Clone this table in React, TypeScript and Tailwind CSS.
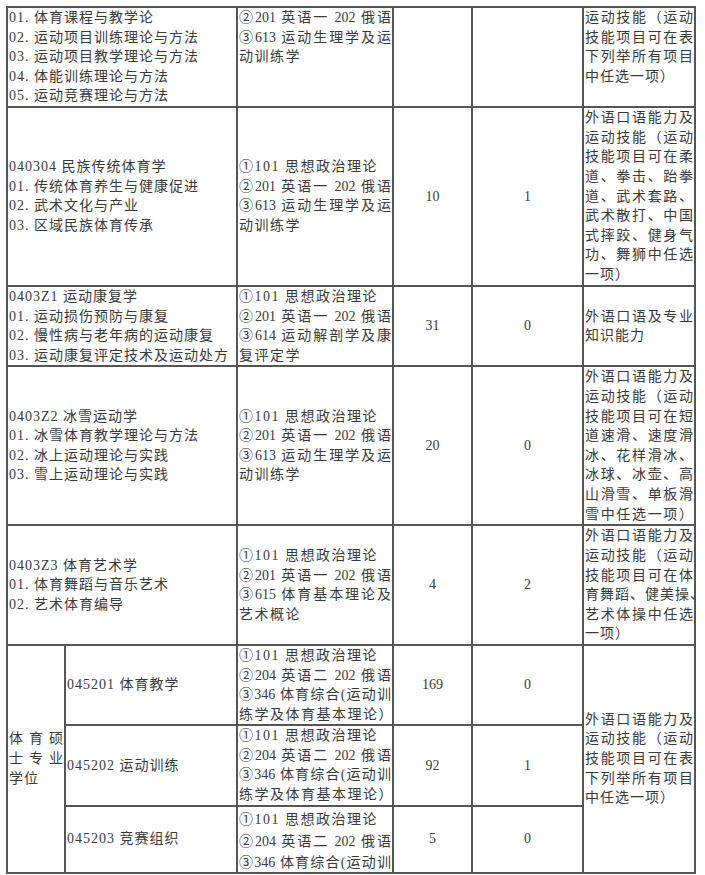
import React from "react";

type L = { t: string; f?: boolean };

const Lines = ({ lines, wide }: { lines: L[]; wide?: boolean }) => (
  <>
    {lines.map((l, i) => (
      <div
        key={i}
        className={
          l.f
            ? "whitespace-nowrap tracking-normal [text-align-last:justify] text-justify"
            : wide
            ? "whitespace-nowrap tracking-[1.5px]"
            : "whitespace-nowrap tracking-[1px]"
        }
      >
        {l.t}
      </div>
    ))}
  </>
);

const p = (...xs: (string | [string])[]): L[] =>
  xs.map((x) => (Array.isArray(x) ? { t: x[0], f: true } : { t: x }));

const td = "border-2 border-[#555] p-0 px-[1px] align-middle";
const tdTop = "border-2 border-[#555] p-0 px-[1px] align-top";
const num = "border-2 border-[#555] p-0 text-center align-middle";

const ex1 = p("①101 思想政治理论", ["②201 英语一 202 俄语"], ["③613 运动生理学及运"], "动训练学");
const exPro = p(
  "①101 思想政治理论",
  ["②204 英语二 202 俄语"],
  ["③346 体育综合(运动训"],
  "练学及体育基本理论）"
);

export default function App() {
  return (
    <div className="min-h-screen bg-white pl-[6px] pt-[6px] font-['Liberation_Serif','Noto_Sans_CJK_SC',serif] text-[14px] leading-[19.6px] text-[#3a3a3a]">
      <table className="table-fixed border-collapse w-[690px]">
        <colgroup>
          <col className="w-[58px]" />
          <col className="w-[172px]" />
          <col className="w-[156px]" />
          <col className="w-[79px]" />
          <col className="w-[111px]" />
          <col className="w-[112px]" />
        </colgroup>
        <tbody>
          <tr className="h-[99px]">
            <td colSpan={2} className={td}>
              <Lines
                lines={p(
                  "01. 体育课程与教学论",
                  "02. 运动项目训练理论与方法",
                  "03. 运动项目教学理论与方法",
                  "04. 体能训练理论与方法",
                  "05. 运动竞赛理论与方法"
                )}
              />
            </td>
            <td className={tdTop}>
              <Lines wide lines={p(["②201 英语一 202 俄语"], ["③613 运动生理学及运"], "动训练学")} />
            </td>
            <td className={num}></td>
            <td className={num}></td>
            <td className={tdTop}>
              <Lines
                lines={p(["运动技能（运动"], ["技能项目可在表"], ["下列举所有项目"], "中任选一项）")}
              />
            </td>
          </tr>
          <tr className="h-[179px]">
            <td colSpan={2} className={td}>
              <Lines
                lines={p(
                  "040304 民族传统体育学",
                  "01. 传统体育养生与健康促进",
                  "02. 武术文化与产业",
                  "03. 区域民族体育传承"
                )}
              />
            </td>
            <td className={td}>
              <Lines wide lines={ex1} />
            </td>
            <td className={num}>10</td>
            <td className={num}>1</td>
            <td className={td}>
              <Lines
                lines={p(
                  ["外语口语能力及"],
                  ["运动技能（运动"],
                  ["技能项目可在柔"],
                  ["道、拳击、跆拳"],
                  ["道、武术套路、"],
                  ["武术散打、中国"],
                  ["式摔跤、健身气"],
                  ["功、舞狮中任选"],
                  "一项）"
                )}
              />
            </td>
          </tr>
          <tr className="h-[79px]">
            <td colSpan={2} className={td}>
              <Lines
                lines={p(
                  "0403Z1 运动康复学",
                  "01. 运动损伤预防与康复",
                  "02. 慢性病与老年病的运动康复",
                  "03. 运动康复评定技术及运动处方"
                )}
              />
            </td>
            <td className={td}>
              <Lines
                wide
                lines={p("①101 思想政治理论", ["②201 英语一 202 俄语"], ["③614 运动解剖学及康"], "复评定学")}
              />
            </td>
            <td className={num}>31</td>
            <td className={num}>0</td>
            <td className={td}>
              <Lines lines={p(["外语口语及专业"], "知识能力")} />
            </td>
          </tr>
          <tr className="h-[159px]">
            <td colSpan={2} className={td}>
              <Lines
                lines={p(
                  "0403Z2 冰雪运动学",
                  "01. 冰雪体育教学理论与方法",
                  "02. 冰上运动理论与实践",
                  "03. 雪上运动理论与实践"
                )}
              />
            </td>
            <td className={td}>
              <Lines wide lines={ex1} />
            </td>
            <td className={num}>20</td>
            <td className={num}>0</td>
            <td className={td}>
              <Lines
                lines={p(
                  ["外语口语能力及"],
                  ["运动技能（运动"],
                  ["技能项目可在短"],
                  ["道速滑、速度滑"],
                  ["冰、花样滑冰、"],
                  ["冰球、冰壶、高"],
                  ["山滑雪、单板滑"],
                  ["雪中任选一项）"]
                )}
              />
            </td>
          </tr>
          <tr className="h-[119px]">
            <td colSpan={2} className={td}>
              <Lines lines={p("0403Z3 体育艺术学", "01. 体育舞蹈与音乐艺术", "02. 艺术体育编导")} />
            </td>
            <td className={td}>
              <Lines
                wide
                lines={p("①101 思想政治理论", ["②201 英语一 202 俄语"], ["③615 体育基本理论及"], "艺术概论")}
              />
            </td>
            <td className={num}>4</td>
            <td className={num}>2</td>
            <td className={td}>
              <Lines
                lines={p(
                  ["外语口语能力及"],
                  ["运动技能（运动"],
                  ["技能项目可在体"],
                  "育舞蹈、健美操、",
                  ["艺术体操中任选"],
                  "一项）"
                )}
              />
            </td>
          </tr>
          <tr className="h-[80px]">
            <td rowSpan={3} className={td}>
              <Lines lines={p(["体育硕"], ["士专业"], "学位")} />
            </td>
            <td className={td}>
              <Lines lines={p("045201 体育教学")} />
            </td>
            <td className={td}>
              <Lines wide lines={exPro} />
            </td>
            <td className={num}>169</td>
            <td className={num}>0</td>
            <td rowSpan={3} className={td}>
              <Lines
                lines={p(
                  ["外语口语能力及"],
                  ["运动技能（运动"],
                  ["技能项目可在表"],
                  ["下列举所有项目"],
                  "中任选一项）"
                )}
              />
            </td>
          </tr>
          <tr className="h-[80px]">
            <td className={td}>
              <Lines lines={p("045202 运动训练")} />
            </td>
            <td className={td}>
              <Lines wide lines={exPro} />
            </td>
            <td className={num}>92</td>
            <td className={num}>1</td>
          </tr>
          <tr className="h-[67px]">
            <td className={td}>
              <Lines lines={p("045203 竞赛组织")} />
            </td>
            <td className={td}>
              <div className="h-[64px] overflow-hidden pt-[2px] leading-[21.5px]">
                <Lines
                  wide
                  lines={p("①101 思想政治理论", ["②204 英语二 202 俄语"], ["③346 体育综合(运动训"])}
                />
              </div>
            </td>
            <td className={num}>5</td>
            <td className={num}>0</td>
          </tr>
        </tbody>
      </table>
    </div>
  );
}
